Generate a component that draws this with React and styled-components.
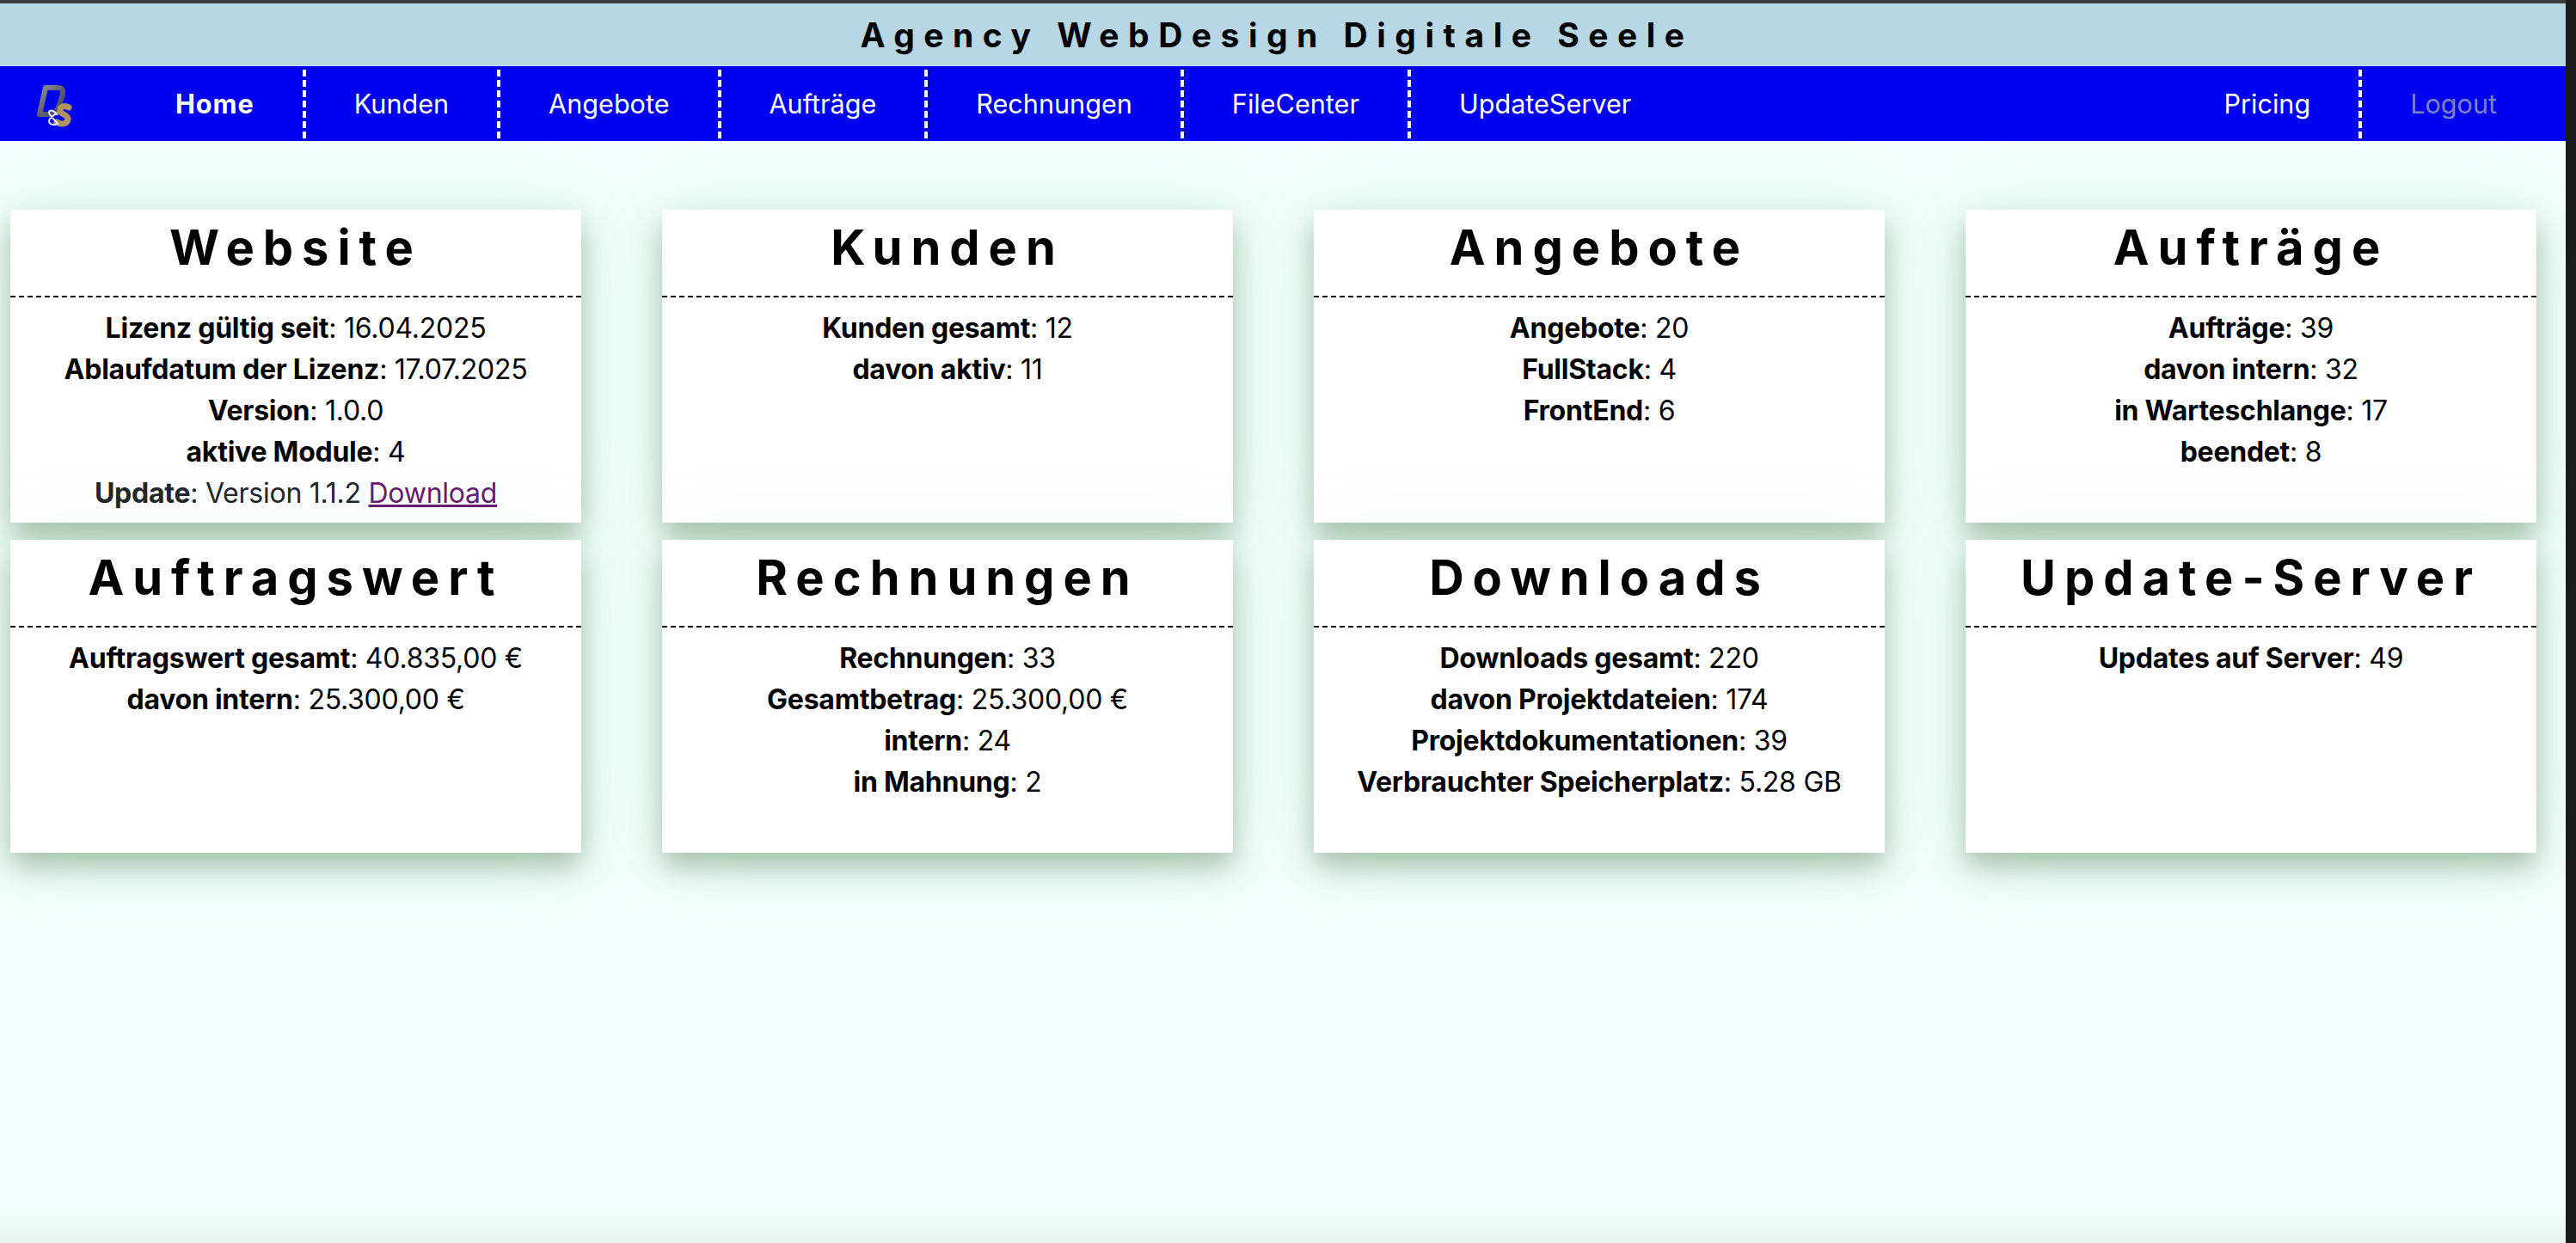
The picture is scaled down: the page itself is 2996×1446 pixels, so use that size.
import React from 'react'
import styled, { createGlobalStyle } from 'styled-components'

const GlobalStyle = createGlobalStyle`
  html, body {
    margin: 0;
    padding: 0;
    height: 100%;
    background: #1c1c1c;
  }
  * {
    box-sizing: border-box;
  }
`;

const Page = styled.div`
  width: 2984px;
  height: 1446px;
  display: flex;
  flex-direction: column;
  font-family: Inter, "Liberation Sans", sans-serif;
  font-size: 32px;
  line-height: 48px;
  color: #000;
  background: linear-gradient(to bottom, #f2fffd 0, #f2fffd 1405px, #e9f3f2 1446px);
`;

const WindowEdge = styled.div`
  height: 4px;
  background: #3e3e3e;
`;

const Banner = styled.header`
  height: 73px;
  display: flex;
  align-items: center;
  justify-content: center;
  padding-right: 14px;
  background: #b6d7e3;
  font-size: 39px;
  font-weight: 700;
  letter-spacing: 10.5px;
`;

const Nav = styled.nav`
  height: 87px;
  display: flex;
  align-items: center;
  padding-right: 24px;
  background: #0000f0;
  font-size: 30.6px;
`;

const Logo = styled.svg`
  width: 50px;
  height: 52px;
  margin: 7px 58px 0 40px;
`;

const NavGroup = styled.div`
  display: flex;
  align-items: center;
  margin-left: ${({ $right }) => ($right ? 'auto' : '0')};
`;

const NavLink = styled.a`
  display: block;
  height: 80px;
  line-height: 80px;
  padding: 0 56px;
  border-right: ${({ $last }) => ($last ? '0' : '4px dashed #fff')};
  color: ${({ $muted }) => ($muted ? '#7f7fc4' : '#fff')};
  font-weight: ${({ $active }) => ($active ? 700 : 400)};
  letter-spacing: ${({ $active }) => ($active ? '1px' : '0')};
  white-space: nowrap;
`;

const Grid = styled.main`
  display: grid;
  grid-template-columns: repeat(4, 664px);
  grid-auto-rows: 364px;
  column-gap: 94px;
  row-gap: 20px;
  padding: 80px 0 0 12px;
`;

const Card = styled.section`
  background: #fff;
  box-shadow: 0 16px 32px rgba(60, 97, 49, 0.39), 0 0 90px rgba(60, 200, 100, 0.1);
  text-align: center;
`;

const CardTitle = styled.h2`
  margin: 0;
  height: 102px;
  line-height: 89px;
  border-bottom: 2px dashed #000;
  font-size: 56px;
  font-weight: 700;
  letter-spacing: 10px;
`;

const CardBody = styled.div`
  padding-top: 12px;
  letter-spacing: -0.25px;
`;

const Row = styled.div`
  color: ${({ $soft }) => ($soft ? '#212529' : '#000')};
  white-space: nowrap;
`;

const DownloadLink = styled.a`
  color: #681a70;
  text-decoration: underline;
`;

const navLeft = ['Kunden', 'Angebote', 'Aufträge', 'Rechnungen', 'FileCenter', 'UpdateServer']

const cards = [
  {
    title: 'Website',
    rows: [
      ['Lizenz gültig seit', '16.04.2025'],
      ['Ablaufdatum der Lizenz', '17.07.2025'],
      ['Version', '1.0.0'],
      ['aktive Module', '4'],
    ],
    update: true,
  },
  { title: 'Kunden', rows: [['Kunden gesamt', '12'], ['davon aktiv', '11']] },
  { title: 'Angebote', rows: [['Angebote', '20'], ['FullStack', '4'], ['FrontEnd', '6']] },
  {
    title: 'Aufträge',
    rows: [['Aufträge', '39'], ['davon intern', '32'], ['in Warteschlange', '17'], ['beendet', '8']],
  },
  { title: 'Auftragswert', rows: [['Auftragswert gesamt', '40.835,00 €'], ['davon intern', '25.300,00 €']] },
  {
    title: 'Rechnungen',
    rows: [['Rechnungen', '33'], ['Gesamtbetrag', '25.300,00 €'], ['intern', '24'], ['in Mahnung', '2']],
  },
  {
    title: 'Downloads',
    rows: [
      ['Downloads gesamt', '220'],
      ['davon Projektdateien', '174'],
      ['Projektdokumentationen', '39'],
      ['Verbrauchter Speicherplatz', '5.28 GB'],
    ],
  },
  { title: 'Update-Server', rows: [['Updates auf Server', '49']] },
]

const LogoMark = () => (
  <Logo viewBox="0 0 50 52" aria-hidden="true">
    <defs>
      <linearGradient id="dsSteel" x1="0" y1="0" x2="1" y2="1">
        <stop offset="0" stopColor="#8d8d98" />
        <stop offset="0.55" stopColor="#5f5f6c" />
        <stop offset="1" stopColor="#3c3c68" />
      </linearGradient>
    </defs>
    <path
      d="M13 4 L27 4 C34 4 34 9 32 15 L29 24 C27 31 22 35 15 35 L6 35 Z"
      fill="none"
      stroke="url(#dsSteel)"
      strokeWidth="6"
      strokeLinejoin="round"
    />
    <path
      d="M40 27 C35 24 29 26 30 31 C31 36 40 35 39 41 C38 47 30 47 26 44"
      fill="none"
      stroke="#b1935f"
      strokeWidth="7"
      strokeLinecap="round"
    />
    <path
      d="M27 36 C24 31 18 29 17 32 C16 36 24 41 27 46 C23 48 17 47 17 43 C17 39 23 36 27 33"
      fill="none"
      stroke="#e3e6f7"
      strokeWidth="2"
    />
  </Logo>
)

const App = () => (
  <>
    <GlobalStyle />
    <Page>
      <WindowEdge />
      <Banner>Agency WebDesign Digitale Seele</Banner>
      <Nav>
        <LogoMark />
        <NavGroup>
          <NavLink $active>Home</NavLink>
          {navLeft.map((item, i) => (
            <NavLink key={item} $last={i === navLeft.length - 1}>{item}</NavLink>
          ))}
        </NavGroup>
        <NavGroup $right>
          <NavLink>Pricing</NavLink>
          <NavLink $last $muted>Logout</NavLink>
        </NavGroup>
      </Nav>
      <Grid>
        {cards.map(card => (
          <Card key={card.title}>
            <CardTitle>{card.title}</CardTitle>
            <CardBody>
              {card.rows.map(([label, value]) => (
                <Row key={label}><b>{label}</b>: {value}</Row>
              ))}
              {card.update && (
                <Row $soft><b>Update</b>: Version 1.1.2 <DownloadLink>Download</DownloadLink></Row>
              )}
            </CardBody>
          </Card>
        ))}
      </Grid>
    </Page>
  </>
)

export default App
